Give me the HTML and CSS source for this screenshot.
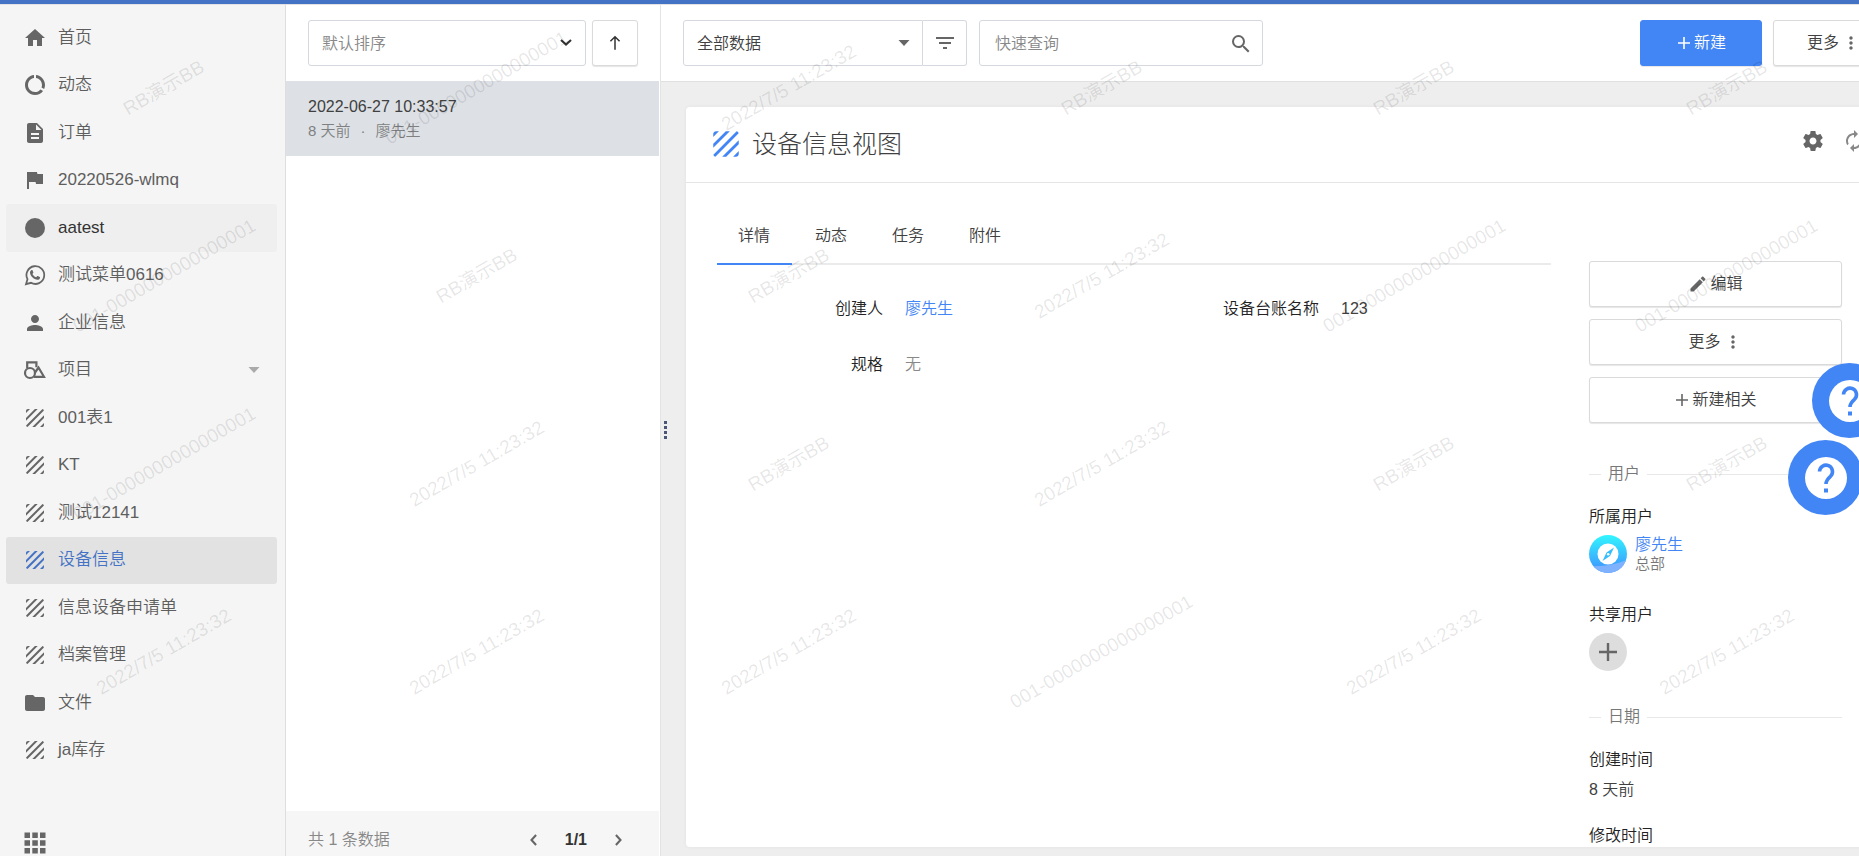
FILE: index.html
```html
<!DOCTYPE html>
<html lang="zh-CN">
<head>
<meta charset="utf-8">
<title>设备信息</title>
<link rel="stylesheet" href="styles.css">
</head>
<body>
<svg class="sprite" aria-hidden="true">
  <symbol id="i-texture" viewBox="0 0 24 24"><path d="M19.51 3.08L3.08 19.51c.09.34.27.65.51.9.25.24.56.42.9.51L20.93 4.49c-.19-.69-.73-1.23-1.42-1.41zM11.88 3L3 11.88v2.83L14.71 3h-2.83zM5 3c-1.1 0-2 .9-2 2v2l4-4H5zm14 18c.55 0 1.05-.22 1.41-.59.37-.36.59-.86.59-1.41v-2l-4 4h2zm-9.71 0h2.83L21 12.12V9.29L9.29 21z"/></symbol>
  <symbol id="i-home" viewBox="0 0 24 24"><path d="M10 20v-6h4v6h5v-8h3L12 3 2 12h3v8z"/></symbol>
  <symbol id="i-usage" viewBox="0 0 24 24"><path d="M13 2.05v3.03c3.39.49 6 3.39 6 6.92 0 .9-.18 1.75-.48 2.54l2.6 1.53c.56-1.24.88-2.62.88-4.07 0-5.18-3.95-9.45-9-9.95zM12 19c-3.87 0-7-3.13-7-7 0-3.53 2.61-6.43 6-6.92V2.05c-5.06.5-9 4.76-9 9.95 0 5.52 4.47 10 9.99 10 3.31 0 6.24-1.61 8.06-4.09l-2.6-1.53C16.17 17.98 14.21 19 12 19z"/></symbol>
  <symbol id="i-doc" viewBox="0 0 24 24"><path d="M14 2H6c-1.1 0-1.99.9-1.99 2L4 20c0 1.1.89 2 1.99 2H18c1.1 0 2-.9 2-2V8l-6-6zm2 16H8v-2h8v2zm0-4H8v-2h8v2zm-3-5V3.5L18.5 9H13z"/></symbol>
  <symbol id="i-flag" viewBox="0 0 24 24"><path d="M14.4 6L14 4H4v17h2v-7h6.6l.4 2h7V6z"/></symbol>
  <symbol id="i-circle" viewBox="0 0 24 24"><circle cx="12" cy="12" r="10"/></symbol>
  <symbol id="i-whatsapp" viewBox="0 0 24 24"><path d="M3 21.2l1.5-5A8.9 8.9 0 1 1 8 19.8z" fill="none" stroke="currentColor" stroke-width="1.8"/><path d="M8.9 6.9c.3 0 .5.1.6.4l.8 1.9c.1.3 0 .5-.1.7l-.8 1c.9 1.6 2 2.6 3.7 3.4l1-1.100c.2-.2.4-.3.7-.2l1.900.9c.3.1.4.3.4.6-.1 1.500-1.300 2.300-2.600 2.300-3.800-.2-7.400-3.900-7.500-7.200 0-1.300.8-2.600 1.900-2.700z"/></symbol>
  <symbol id="i-person" viewBox="0 0 24 24"><path d="M12 12c2.210 0 4-1.790 4-4s-1.790-4-4-4-4 1.790-4 4 1.790 4 4 4zm0 2c-2.670 0-8 1.340-8 4v2h16v-2c0-2.660-5.330-4-8-4z"/></symbol>
  <symbol id="i-shapes" viewBox="0 0 24 24"><g fill="none" stroke="currentColor" stroke-width="2.200"><path d="M4.200 10V4.300h9.200v5"/><circle cx="7" cy="15" r="5"/><path d="M11 18.800h10L15.500 9.500l-3.500 5"/></g></symbol>
  <symbol id="i-folder" viewBox="0 0 24 24"><path d="M10 4H4c-1.100 0-2 .9-2 2v12c0 1.100.9 2 2 2h16c1.100 0 2-.9 2-2V8c0-1.100-.9-2-2-2h-8z"/></symbol>
  <symbol id="i-apps" viewBox="0 0 24 24"><path d="M1.500 1.500h5.500v5.500H1.500zM9.300 1.500h5.500v5.500H9.300zM17 1.500h5.500v5.500H17zM1.500 9.300h5.500v5.500H1.500zM9.300 9.300h5.500v5.500H9.300zM17 9.300h5.500v5.500H17zM1.500 17h5.500v5.500H1.500zM9.300 17h5.500v5.500H9.300zM17 17h5.500v5.500H17z"/></symbol>
  <symbol id="i-caret" viewBox="0 0 24 24"><path d="M6.500 9h11L12 15z"/></symbol>
  <symbol id="i-chevron" viewBox="0 0 24 24"><path d="M6 9.500l6 5.500 6-5.500" fill="none" stroke="currentColor" stroke-width="2.500"/></symbol>
  <symbol id="i-up" viewBox="0 0 24 24"><path d="M12 20V4.500M6.500 10l5.500-5.500 5.500 5.500" fill="none" stroke="currentColor" stroke-width="1.800"/></symbol>
  <symbol id="i-filter" viewBox="0 0 24 24"><path d="M10 18h4v-2h-4v2zM3 6v2h18V6H3zm3 7h12v-2H6v2z"/></symbol>
  <symbol id="i-search" viewBox="0 0 24 24"><path d="M15.500 14h-.79l-.28-.27A6.471 6.471 0 0 0 16 9.500 6.500 6.500 0 1 0 9.500 16c1.610 0 3.090-.59 4.230-1.570l.27.28v.79l5 4.990L20.490 19l-4.990-5zm-6 0C7.010 14 5 11.990 5 9.500S7.010 5 9.500 5 14 7.010 14 9.500 11.990 14 9.500 14z"/></symbol>
  <symbol id="i-plus" viewBox="0 0 24 24"><path d="M12 3v18M3 12h18" fill="none" stroke="currentColor" stroke-width="2.400"/></symbol>
  <symbol id="i-more" viewBox="0 0 24 24"><path d="M12 8c1.100 0 2-.9 2-2s-.9-2-2-2-2 .9-2 2 .9 2 2 2zm0 2c-1.100 0-2 .9-2 2s.9 2 2 2 2-.9 2-2-.9-2-2-2zm0 6c-1.100 0-2 .9-2 2s.9 2 2 2 2-.9 2-2-.9-2-2-2z"/></symbol>
  <symbol id="i-gear" viewBox="0 0 24 24"><path d="M19.430 12.980c.04-.32.07-.64.07-.98s-.03-.66-.07-.98l2.110-1.650c.19-.15.24-.42.12-.64l-2-3.460c-.12-.22-.39-.3-.61-.22l-2.490 1c-.52-.4-1.080-.73-1.690-.98l-.38-2.650C14.460 2.180 14.250 2 14 2h-4c-.25 0-.46.18-.49.42l-.38 2.650c-.61.25-1.170.59-1.690.98l-2.490-1c-.23-.09-.49 0-.61.22l-2 3.460c-.13.22-.07.49.12.64l2.110 1.650c-.04.32-.07.65-.07.98s.03.66.07.98l-2.110 1.650c-.19.15-.24.42-.12.64l2 3.460c.12.22.39.3.61.22l2.490-1c.52.4 1.080.73 1.690.98l.38 2.650c.03.24.24.42.49.42h4c.25 0 .46-.18.49-.42l.38-2.650c.61-.25 1.170-.59 1.690-.98l2.490 1c.23.09.49 0 .61-.22l2-3.460c.12-.22.07-.49-.12-.64l-2.110-1.650zM12 15.500c-1.930 0-3.500-1.570-3.500-3.500s1.570-3.500 3.500-3.500 3.500 1.570 3.500 3.500-1.570 3.500-3.500 3.500z"/></symbol>
  <symbol id="i-refresh" viewBox="0 0 24 24"><path d="M12 6v3l4-4-4-4v3c-4.420 0-8 3.580-8 8 0 1.570.46 3.030 1.240 4.260L6.700 14.800c-.45-.83-.7-1.790-.7-2.800 0-3.310 2.690-6 6-6zm6.760 1.740L17.300 9.200c.44.84.7 1.790.7 2.800 0 3.310-2.690 6-6 6v-3l-4 4 4 4v-3c4.420 0 8-3.580 8-8 0-1.570-.46-3.030-1.240-4.260z"/></symbol>
  <symbol id="i-edit" viewBox="0 0 24 24"><path d="M3 17.250V21h3.750L17.810 9.940l-3.750-3.750L3 17.250zM20.710 7.040c.39-.39.39-1.020 0-1.410l-2.340-2.340c-.39-.39-1.020-.39-1.410 0l-1.830 1.830 3.750 3.750 1.830-1.830z"/></symbol>
  <symbol id="i-help" viewBox="0 0 42 42"><circle cx="21" cy="21" r="21" fill="#fff"/><path d="M14.500 14.500a6.500 6.500 0 1 1 11 4.800c-2.700 2.300-4.500 4-4.500 7.700" fill="none" stroke="#4285f4" stroke-width="3.600"/><path d="M19 31.500h4v4h-4z" fill="#4285f4"/></symbol>
</svg>

<div class="app">
  <nav class="sidebar" aria-label="导航">
    <ul class="menu">
      <li><a class="menu-item" href="#"><svg class="icon"><use href="#i-home"/></svg>首页</a></li>
      <li><a class="menu-item" href="#"><svg class="icon"><use href="#i-usage"/></svg>动态</a></li>
      <li><a class="menu-item" href="#"><svg class="icon"><use href="#i-doc"/></svg>订单</a></li>
      <li><a class="menu-item" href="#"><svg class="icon"><use href="#i-flag"/></svg>20220526-wlmq</a></li>
      <li><a class="menu-item is-hover" href="#"><svg class="icon"><use href="#i-circle"/></svg>aatest</a></li>
      <li><a class="menu-item" href="#"><svg class="icon"><use href="#i-whatsapp"/></svg>测试菜单0616</a></li>
      <li><a class="menu-item" href="#"><svg class="icon"><use href="#i-person"/></svg>企业信息</a></li>
      <li><a class="menu-item" href="#"><svg class="icon"><use href="#i-shapes"/></svg>项目<svg class="icon menu-caret"><use href="#i-caret"/></svg></a></li>
      <li><a class="menu-item" href="#"><svg class="icon"><use href="#i-texture"/></svg>001表1</a></li>
      <li><a class="menu-item" href="#"><svg class="icon"><use href="#i-texture"/></svg>KT</a></li>
      <li><a class="menu-item" href="#"><svg class="icon"><use href="#i-texture"/></svg>测试12141</a></li>
      <li><a class="menu-item is-active" href="#" aria-current="page"><svg class="icon"><use href="#i-texture"/></svg>设备信息</a></li>
      <li><a class="menu-item" href="#"><svg class="icon"><use href="#i-texture"/></svg>信息设备申请单</a></li>
      <li><a class="menu-item" href="#"><svg class="icon"><use href="#i-texture"/></svg>档案管理</a></li>
      <li><a class="menu-item" href="#"><svg class="icon"><use href="#i-folder"/></svg>文件</a></li>
      <li><a class="menu-item" href="#"><svg class="icon"><use href="#i-texture"/></svg>ja库存</a></li>
    </ul>
    <button class="apps" type="button" aria-label="应用"><svg class="icon"><use href="#i-apps"/></svg></button>
  </nav>

  <section class="list">
    <div class="list-tools">
      <div class="field sort">
        <select class="field-input muted" aria-label="排序"><option>默认排序</option></select>
        <svg class="icon small dark field-arrow"><use href="#i-chevron"/></svg>
      </div>
      <button class="btn square" type="button" aria-label="升序"><svg class="icon dark small"><use href="#i-up"/></svg></button>
    </div>
    <a class="record" href="#">
      <span class="record-title">2022-06-27 10:33:57</span>
      <span class="record-meta"><span>8 天前</span><span>·</span><span>廖先生</span></span>
    </a>
    <footer class="list-footer">
      <span>共 1 条数据</span>
      <div class="pager">
        <button class="pager-btn" type="button" aria-label="上一页"><svg class="icon small prev"><use href="#i-chevron"/></svg></button>
        <strong class="pager-now">1/1</strong>
        <button class="pager-btn" type="button" aria-label="下一页"><svg class="icon small next"><use href="#i-chevron"/></svg></button>
      </div>
    </footer>
  </section>

  <main class="main">
    <div class="canvas">
      <header class="toolbar">
        <div class="filter">
          <div class="field filter-select">
            <select class="field-input" aria-label="视图"><option>全部数据</option></select>
            <svg class="icon field-arrow"><use href="#i-caret"/></svg>
          </div>
          <button class="filter-btn" type="button" aria-label="筛选"><svg class="icon"><use href="#i-filter"/></svg></button>
        </div>
        <div class="field search">
          <input class="field-input" type="text" placeholder="快速查询" aria-label="快速查询">
          <svg class="icon field-arrow"><use href="#i-search"/></svg>
        </div>
        <div class="actions">
          <button class="btn primary" type="button"><svg class="icon tiny"><use href="#i-plus"/></svg>新建</button>
          <button class="btn" type="button">更多<svg class="icon small"><use href="#i-more"/></svg></button>
        </div>
      </header>

      <div class="workspace">
        <div class="splitter"><i></i><i></i><i></i><i></i></div>
        <article class="card">
          <header class="card-head">
            <svg class="icon title-icon"><use href="#i-texture"/></svg>
            <h1 class="title">设备信息视图</h1>
            <button class="icon-btn" type="button" aria-label="设置"><svg class="icon"><use href="#i-gear"/></svg></button>
            <button class="icon-btn light" type="button" aria-label="刷新"><svg class="icon"><use href="#i-refresh"/></svg></button>
          </header>
          <div class="card-body">
            <section class="detail">
              <div class="tabs">
                <a class="tab is-active" href="#">详情</a>
                <a class="tab" href="#">动态</a>
                <a class="tab" href="#">任务</a>
                <a class="tab" href="#">附件</a>
              </div>
              <dl class="fields">
                <div class="pair"><dt>创建人</dt><dd><a class="link" href="#">廖先生</a></dd></div>
                <div class="pair"><dt>设备台账名称</dt><dd>123</dd></div>
                <div class="pair"><dt>规格</dt><dd class="muted">无</dd></div>
              </dl>
            </section>

            <aside class="side">
              <div class="side-buttons">
                <button class="btn" type="button"><svg class="icon small"><use href="#i-edit"/></svg>编辑</button>
                <button class="btn" type="button">更多<svg class="icon small"><use href="#i-more"/></svg></button>
                <button class="btn" type="button"><svg class="icon tiny"><use href="#i-plus"/></svg>新建相关</button>
              </div>
              <h2 class="divider">用户</h2>
              <h3 class="side-label">所属用户</h3>
              <div class="user">
                <svg class="avatar" viewBox="0 0 38 38" aria-hidden="true">
                  <defs>
                    <linearGradient id="sky" x1="0" y1="0" x2="0" y2="1"><stop offset="0" stop-color="#32f6ff"/><stop offset="1" stop-color="#3f8cff"/></linearGradient>
                    <clipPath id="round"><circle cx="19" cy="19" r="19"/></clipPath>
                  </defs>
                  <g clip-path="url(#round)">
                    <path d="M0 0h38v38H0z" fill="url(#sky)"/>
                    <path d="M0 31c12 1 25-1 38-6v13H0z" fill="#7eb2ff"/>
                  </g>
                  <circle cx="19" cy="19" r="10.500" fill="#fff"/>
                  <path d="M25 12.500l-4 8.500-7.500 5 4-8.500z" fill="#35bdfb"/>
                  <circle cx="19.200" cy="19.200" r="1.300" fill="#fff"/>
                </svg>
                <div class="user-text"><a class="link" href="#">廖先生</a><span class="user-dept">总部</span></div>
              </div>
              <h3 class="side-label">共享用户</h3>
              <button class="add" type="button" aria-label="添加共享用户"><svg class="icon"><use href="#i-plus"/></svg></button>
              <h2 class="divider">日期</h2>
              <h3 class="side-label">创建时间</h3>
              <p class="side-value">8 天前</p>
              <h3 class="side-label">修改时间</h3>
            </aside>
          </div>
        </article>
      </div>
    </div>
  </main>
</div>

<div class="watermark" aria-hidden="true">
  <span>RB演示BB</span><span>001-0000000000000001</span><span>2022/7/5 11:23:32</span><span>RB演示BB</span><span>RB演示BB</span><span>RB演示BB</span>
  <span>001-0000000000000001</span><span>RB演示BB</span><span>RB演示BB</span><span>2022/7/5 11:23:32</span><span>001-0000000000000001</span><span>001-0000000000000001</span>
  <span>001-0000000000000001</span><span>2022/7/5 11:23:32</span><span>RB演示BB</span><span>2022/7/5 11:23:32</span><span>RB演示BB</span><span>RB演示BB</span>
  <span>2022/7/5 11:23:32</span><span>2022/7/5 11:23:32</span><span>2022/7/5 11:23:32</span><span>001-0000000000000001</span><span>2022/7/5 11:23:32</span><span>2022/7/5 11:23:32</span>
</div>

<button class="help help-far" type="button" aria-label="帮助"><svg class="help-icon"><use href="#i-help"/></svg></button>
<button class="help help-near" type="button" aria-label="在线帮助"><svg class="help-icon"><use href="#i-help"/></svg></button>
</body>
</html>
```

FILE: styles.css
```css
*, *::before, *::after { box-sizing: border-box; }

body {
  margin: 0;
  height: 100vh;
  overflow: hidden;
  font: 350 16px/24px "Liberation Sans", "Noto Sans CJK SC", sans-serif;
  color: #404040;
  background: #fff;
}

ul, dl, dd, h1, h2, h3, p { margin: 0; padding: 0; font-weight: inherit; }
h2, h3 { font-size: inherit; }
a { color: inherit; text-decoration: none; }
button, input, select { font: inherit; color: inherit; margin: 0; }
button { border: 0; padding: 0; background: none; }

.sprite { position: absolute; width: 0; height: 0; }
.icon { width: 24px; height: 24px; flex: none; fill: currentColor; color: #666; }
.icon.small { width: 20px; height: 20px; }
.icon.tiny { width: 16px; height: 16px; }
.icon.dark { color: #333; }
.muted { color: #888; }
.link { color: #4285f4; }

.app {
  display: flex;
  height: 100%;
  border-top: 4px solid #4472c4;
}

/* Navigation */
.sidebar {
  flex: none;
  width: 286px;
  padding-top: 9px;
  display: flex;
  flex-direction: column;
  justify-content: space-between;
  background: #f5f5f5;
  border-top: 1px solid #e3e3e3;
  border-right: 1px solid #dedede;
}
.menu {
  display: grid;
  grid-auto-rows: 1fr;
  height: 760px;
  padding: 0 8px 0 6px;
  list-style: none;
}
.menu-item {
  display: flex;
  align-items: center;
  gap: 11px;
  height: 100%;
  padding: 0 11px 0 17px;
  border-radius: 3px;
  font-size: 17px;
  color: #5e5e5e;
}
.menu-item.is-hover { background: #efefef; color: #333; }
.menu-item.is-active, .menu-item.is-active .icon { color: #4472c4; }
.menu-item.is-active { background: #e2e2e2; }
.menu-caret.icon { margin-left: auto; color: #aaa; }
.apps { align-self: flex-start; margin: 0 0 1px 23px; height: 24px; }

/* Record list */
.list {
  flex: none;
  width: 375px;
  display: flex;
  flex-direction: column;
  border-top: 1px solid #e3e3e3;
  border-right: 1px solid #e3e3e3;
}
.list-tools { display: flex; gap: 6px; padding: 15px 22px; }
.field {
  position: relative;
  height: 46px;
  border: 1px solid #d5d8de;
  border-radius: 3px;
}
.field-input {
  appearance: none;
  width: 100%;
  height: 100%;
  padding: 1px 13px 0;
  border: 0;
  background: transparent;
  outline: 0;
}
.field-input::placeholder { color: #888; opacity: 1; }
.field-arrow { position: absolute; right: 9px; top: 11px; pointer-events: none; }
.sort { flex: 1; }
.btn {
  display: flex;
  align-items: center;
  justify-content: center;
  gap: 2px;
  height: 46px;
  min-width: 122px;
  border: 1px solid #dadada;
  border-radius: 3px;
  background: #fff;
  box-shadow: 0 1px 1px rgba(0, 0, 0, .1);
}
.btn.square { min-width: 46px; }
.btn.primary { background: #4285f4; border-color: #4285f4; color: #fff; }
.btn.primary .icon { color: #fff; }

.record {
  display: flex;
  flex-direction: column;
  padding: 13px 22px;
  margin-right: 1px;
  background: #dde1e6;
}
.record-title { line-height: 25px; }
.record-meta { display: flex; gap: 10px; font-size: 15px; color: #808080; }
.list-footer {
  display: flex;
  justify-content: space-between;
  margin: auto 1px 0 0;
  padding: 17px 31px 4px 22px;
  background: #f6f6f6;
  color: #888;
}
.pager { display: flex; align-items: center; gap: 21px; color: #333; }
.pager-now { font-weight: 700; }
.pager-btn { display: flex; }
.prev { transform: rotate(90deg); }
.next { transform: rotate(-90deg); }

/* Main area: its canvas is wider than the window and runs off the right edge */
.main { flex: 1; min-width: 0; overflow: hidden; }
.canvas {
  display: flex;
  flex-direction: column;
  width: calc(100% + 58px);
  height: 100%;
}
.toolbar {
  display: flex;
  align-items: center;
  gap: 12px;
  padding: 15px 22px;
  border-top: 1px solid #e3e3e3;
  border-bottom: 1px solid #e0e0e0;
}
.filter { display: flex; }
.filter-select { width: 240px; border-radius: 3px 0 0 3px; }
.filter-select .field-arrow { right: 6px; top: 10px; }
.filter-btn {
  display: flex;
  align-items: center;
  justify-content: center;
  width: 44px;
  border: 1px solid #d5d8de;
  border-left: 0;
  border-radius: 0 3px 3px 0;
}
.search { width: 284px; }
.search .field-input { padding-left: 15px; }
.actions { display: flex; gap: 11px; margin-left: auto; }

.workspace {
  flex: 1;
  min-height: 0;
  display: flex;
  padding: 25px 27px 9px 0;
  background: #eee;
}
.splitter {
  flex: none;
  width: 25px;
  padding: 0 0 95px 3px;
  display: flex;
  flex-direction: column;
  justify-content: center;
  gap: 2px;
}
.splitter i { width: 3px; height: 3px; background: #4a5578; }
.card {
  flex: 1;
  display: flex;
  flex-direction: column;
  overflow: hidden;
  background: #fff;
  border-radius: 4px;
  box-shadow: 0 0 4px rgba(0, 0, 0, .05);
}
.card-head {
  display: flex;
  align-items: center;
  height: 76px;
  flex: none;
  padding: 0 24px 2px 23px;
  border-bottom: 1px solid #e5e5e5;
}
.title-icon.icon { width: 34px; height: 34px; color: #4285f4; }
.title { margin: 0 auto 0 9px; font-size: 25px; font-weight: 300; line-height: 32px; }
.icon-btn { display: flex; margin-left: 17px; padding-bottom: 5px; }
.icon-btn.light .icon { color: #888; }
.card-body { display: flex; gap: 38px; padding: 24px 48px 0 31px; }
.detail { flex: 1; }
.tabs { display: flex; gap: 2px; border-bottom: 2px solid #ebebeb; }
.tab { padding: 17px 22px 15px 21px; margin-bottom: -2px; border-bottom: 2px solid transparent; }
.tab.is-active { border-color: #4285f4; }
.fields {
  display: grid;
  grid-template-columns: 1fr 1fr;
  row-gap: 32px;
  margin: 32px -19px 0;
}
.pair { display: grid; grid-template-columns: 185px 1fr; gap: 22px; }
.pair dt { text-align: right; color: #222; }

/* Side panel */
.side { flex: none; width: 253px; padding-top: 54px; }
.side-buttons { display: grid; gap: 12px; }
.divider {
  display: flex;
  align-items: center;
  gap: 7px;
  margin: 39px 0 19px;
  color: #777;
}
.divider::before, .divider::after { content: ""; height: 1px; background: #e8e8e8; }
.divider::before { width: 12px; }
.divider::after { flex: 1; }
.side-label { color: #222; }
.user { display: flex; gap: 8px; margin: 6px 0 30px; }
.avatar { width: 38px; height: 38px; }
.user-text { display: flex; flex-direction: column; line-height: 19px; }
.user-dept { font-size: 15px; color: #777; }
.add {
  display: flex;
  align-items: center;
  justify-content: center;
  width: 38px;
  height: 38px;
  margin: 6px 0 34px;
  border-radius: 50%;
  background: #ddd;
}
.add + .divider { margin-top: 34px; }
.side-value { margin: 6px 0 22px; }

/* Overlays */
.watermark {
  position: absolute;
  top: -6px;
  left: 8px;
  width: 1875px;
  display: grid;
  grid-template-columns: repeat(6, 1fr);
  grid-auto-rows: 188px;
  place-items: center;
  pointer-events: none;
  font-size: 19px;
  font-weight: 400;
  white-space: nowrap;
  color: rgba(0, 0, 0, .1);
}
.watermark span { transform: rotate(-30deg); }
.help {
  position: fixed;
  display: flex;
  align-items: center;
  justify-content: center;
  width: 75px;
  height: 75px;
  border-radius: 50%;
  background: #4285f4;
}
.help-icon { width: 42px; height: 42px; }
.help-far { top: 363px; right: -28px; }
.help-near { top: 440px; right: -4px; }
```
